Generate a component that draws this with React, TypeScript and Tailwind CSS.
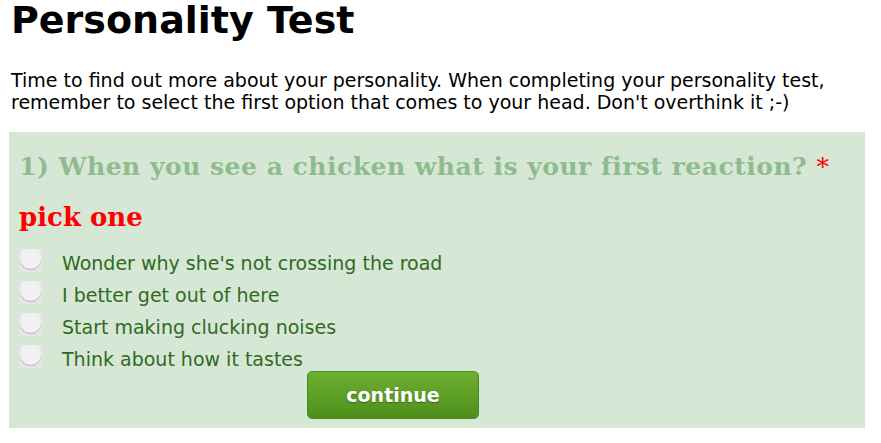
import React from "react";

const options = [
  "Wonder why she's not crossing the road",
  "I better get out of here",
  "Start making clucking noises",
  "Think about how it tastes",
];

function Check() {
  return (
    <span className="relative block w-[23px] h-[23px] shrink-0 overflow-hidden bg-[#e4e5e4]">
      <span className="absolute left-[1px] -top-[3px] w-[21px] h-[23px] rounded-full bg-[#f1f1f1] shadow-[0_1px_1px_rgba(0,0,0,0.2)]" />
    </span>
  );
}

export default function App() {
  return (
    <div className="flex flex-col pl-[9px] pr-[16px] bg-white min-h-[443px] font-['DejaVu_Sans',Verdana,sans-serif] text-black">
      <h1 className="mt-px text-[38px] leading-[38px] font-bold pl-[2px]">Personality Test</h1>

      <p className="mt-[30px] text-[19px] leading-[22px] pl-[2px]">
        Time to find out more about your personality. When completing your personality test,
        <br />
        remember to select the first option that comes to your head. Don't overthink it ;-)
      </p>

      <div className="mt-[19px] bg-[#d6e7d5] px-[10px] pt-[20px] pb-[9px]">
        <h2 className="font-['DejaVu_Serif',Georgia,serif] font-bold text-[25px] leading-[30px] tracking-[0.5px] text-[#8fbc8f] whitespace-nowrap">
          1) When you see a chicken what is your first reaction?{" "}
          <span className="text-[#ff0000] font-normal">*</span>
        </h2>

        <div className="mt-[20px] font-['DejaVu_Serif',Georgia,serif] font-bold text-[26px] leading-[30px] text-[#ff0000]">
          pick one
        </div>

        <ul className="mt-[17px] flex flex-col gap-[9px]">
          {options.map((o) => (
            <li key={o} className="flex items-start h-[23px]">
              <Check />
              <span className="ml-[20px] pt-[3px] text-[19px] leading-[23px] text-[#2f6b1f] whitespace-nowrap">{o}</span>
            </li>
          ))}
        </ul>

        <button className="mt-[3px] ml-[288px] w-[172px] h-[48px] rounded-[5px] border border-[#4b8a22] bg-gradient-to-b from-[#6cb02f] to-[#4e8f1c] text-white font-bold text-[19px] [text-shadow:0_1px_1px_rgba(0,0,0,0.35)]">
          continue
        </button>
      </div>
    </div>
  );
}
